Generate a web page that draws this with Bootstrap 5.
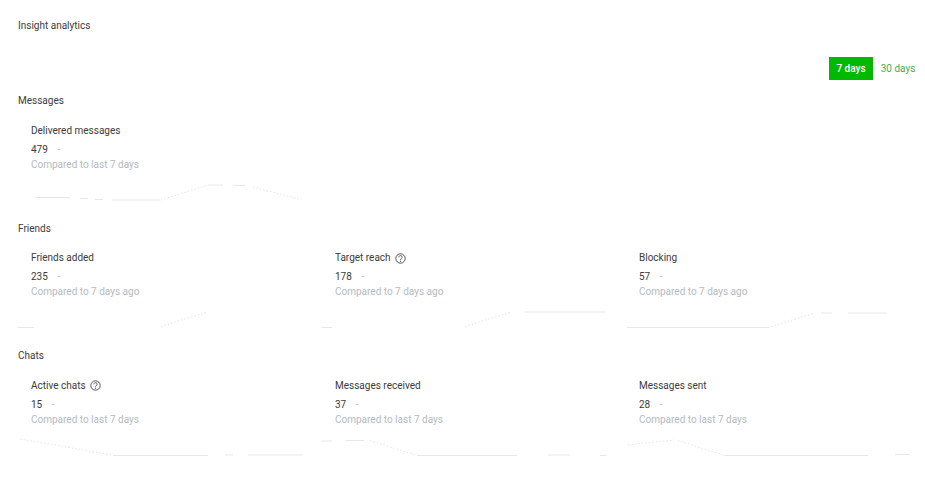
<!DOCTYPE html>
<html lang="en">
<head>
<meta charset="utf-8">
<title>Insight analytics</title>
<link rel="stylesheet" href="https://cdn.jsdelivr.net/npm/bootstrap@5.3.0/dist/css/bootstrap.min.css">
<style>
html,body{height:494px;overflow:hidden}
body{font-family:Roboto,"Liberation Sans",sans-serif;font-size:10px;line-height:14px;color:#3b3b3b;background:#fff;padding:19px 10px 0 18px}
.page-title{margin:0;font-size:10px;font-weight:400;line-height:14px;height:38px}
.range-bar{height:23px;margin-bottom:14px}
.range-btn{font-size:10px;line-height:23px;height:23px;padding:0;border:0;border-radius:0;font-weight:500}
.range-on{width:44px;background:#00b900;color:#fff}
.range-on:hover{background:#00b900;color:#fff}
.range-off{width:50px;color:#4cab4c;background:transparent;font-weight:400;margin-right:-8px}
.sect-title{font-size:10px;font-weight:400;line-height:14px;margin:0 0 15.9px}
.sect{height:127.5px}
.metric{width:304px;flex:none;position:relative}
.metric-body{padding-left:13px}
.metric-name{line-height:14px;margin-bottom:5px;display:flex;align-items:center;gap:4px}
.metric-val{line-height:14px;display:flex;gap:9.500px}
.metric-dash{color:#b7bcc4}
.metric-cmp{line-height:14px;margin-top:1px;color:#b4b9c0}
.spark{display:block;width:304px;height:30px;margin-top:-1px;overflow:visible}
.spark .s{fill:none;stroke:#e6e7e9;stroke-width:1}
.spark .d{fill:none;stroke:#dcdee1;stroke-width:.8;stroke-dasharray:1.5 2}
.qmark{width:11px;height:11px;flex:none}
</style>
</head>
<body>
<h1 class="page-title">Insight analytics</h1>
<div class="range-bar d-flex justify-content-end">
  <button type="button" class="btn range-btn range-on">7 days</button>
  <button type="button" class="btn range-btn range-off">30 days</button>
</div>

<section class="sect">
  <h2 class="sect-title">Messages</h2>
  <div class="d-flex">
    <div class="metric">
      <div class="metric-body">
        <div class="metric-name">Delivered messages</div>
        <div class="metric-val"><span>479</span><span class="metric-dash">-</span></div>
        <div class="metric-cmp">Compared to last 7 days</div>
      </div>
      <svg class="spark" viewBox="0 0 304 30" aria-hidden="true">
        <path class="s" d="M17 26.500H52M62 27.500H70M77 28.500H85M94 29H142"/>
        <path class="d" d="M143 29L190 14"/>
        <path class="s" d="M190 14H205M215 14.500H227"/>
        <path class="d" d="M235 16L283 28.500"/>
      </svg>
    </div>
  </div>
</section>

<section class="sect">
  <h2 class="sect-title">Friends</h2>
  <div class="d-flex">
    <div class="metric">
      <div class="metric-body">
        <div class="metric-name">Friends added</div>
        <div class="metric-val"><span>235</span><span class="metric-dash">-</span></div>
        <div class="metric-cmp">Compared to 7 days ago</div>
      </div>
      <svg class="spark" viewBox="0 0 304 30" aria-hidden="true">
        <path class="s" d="M0 29.500H16"/>
        <path class="d" d="M143 28.500L189 14"/>
      </svg>
    </div>
    <div class="metric">
      <div class="metric-body">
        <div class="metric-name">Target reach
          <svg class="qmark" viewBox="0 0 11 11" aria-hidden="true"><circle cx="5.500" cy="5.500" r="4.700" fill="none" stroke="#444" stroke-width=".9"/><path d="M3.900 4.300a1.600 1.600 0 1 1 2.500 1.300c-.6.400-.9.700-.9 1.300" fill="none" stroke="#444" stroke-width=".9"/><circle cx="5.500" cy="8.200" r=".6" fill="#444"/></svg>
        </div>
        <div class="metric-val"><span>178</span><span class="metric-dash">-</span></div>
        <div class="metric-cmp">Compared to 7 days ago</div>
      </div>
      <svg class="spark" viewBox="0 0 304 30" aria-hidden="true">
        <path class="s" d="M0 29.500H10"/>
        <path class="d" d="M143 28.500L189 14"/>
        <path class="s" d="M203 14H284"/>
      </svg>
    </div>
    <div class="metric">
      <div class="metric-body">
        <div class="metric-name">Blocking</div>
        <div class="metric-val"><span>57</span><span class="metric-dash">-</span></div>
        <div class="metric-cmp">Compared to 7 days ago</div>
      </div>
      <svg class="spark" viewBox="0 0 304 30" aria-hidden="true">
        <path class="s" d="M1 29.500H143"/>
        <path class="d" d="M145 28.500L189 15"/>
        <path class="s" d="M195 15H206M222 15H260"/>
      </svg>
    </div>
  </div>
</section>

<section class="sect">
  <h2 class="sect-title">Chats</h2>
  <div class="d-flex">
    <div class="metric">
      <div class="metric-body">
        <div class="metric-name">Active chats
          <svg class="qmark" viewBox="0 0 11 11" aria-hidden="true"><circle cx="5.500" cy="5.500" r="4.700" fill="none" stroke="#444" stroke-width=".9"/><path d="M3.900 4.300a1.600 1.600 0 1 1 2.500 1.300c-.6.400-.9.700-.9 1.300" fill="none" stroke="#444" stroke-width=".9"/><circle cx="5.500" cy="8.200" r=".6" fill="#444"/></svg>
        </div>
        <div class="metric-val"><span>15</span><span class="metric-dash">-</span></div>
        <div class="metric-cmp">Compared to last 7 days</div>
      </div>
      <svg class="spark" viewBox="0 0 304 30" aria-hidden="true">
        <path class="d" d="M2 13L94 29"/>
        <path class="s" d="M95 29.500H190M207 29H215M230 29H284"/>
      </svg>
    </div>
    <div class="metric">
      <div class="metric-body">
        <div class="metric-name">Messages received</div>
        <div class="metric-val"><span>37</span><span class="metric-dash">-</span></div>
        <div class="metric-cmp">Compared to last 7 days</div>
      </div>
      <svg class="spark" viewBox="0 0 304 30" aria-hidden="true">
        <path class="s" d="M0 15H10M24 14.500H42"/>
        <path class="d" d="M48 14.500L94 29"/>
        <path class="s" d="M95 29.500H195M226 29H248M278 29.500H284"/>
      </svg>
    </div>
    <div class="metric">
      <div class="metric-body">
        <div class="metric-name">Messages sent</div>
        <div class="metric-val"><span>28</span><span class="metric-dash">-</span></div>
        <div class="metric-cmp">Compared to last 7 days</div>
      </div>
      <svg class="spark" viewBox="0 0 304 30" aria-hidden="true">
        <path class="d" d="M2 19L48 14"/>
        <path class="d" d="M52 14.500L97 29"/>
        <path class="s" d="M98 29.500H242M269 28.500H284"/>
      </svg>
    </div>
  </div>
</section>
<script src="https://cdn.jsdelivr.net/npm/bootstrap@5.3.0/dist/js/bootstrap.bundle.min.js"></script>
</body>
</html>
